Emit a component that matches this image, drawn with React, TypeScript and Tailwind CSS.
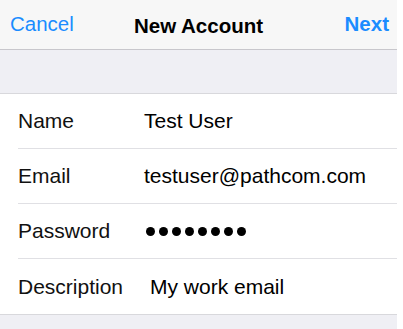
import React from 'react';

const rows = [
  { label: 'Name', value: 'Test User' },
  { label: 'Email', value: 'testuser@pathcom.com' },
  { label: 'Password', value: null },
  { label: 'Description', value: 'My work email', shift: true },
];

export default function App() {
  return (
    <div className="min-h-[329px] w-[403px] bg-white font-['Liberation_Sans',Arial,sans-serif]">
      <div className="w-[397px] min-h-[329px] bg-[#efeff4]">
        {/* nav bar */}
        <div className="relative flex h-[50px] items-center justify-between border-b border-[#c8c7cc] bg-[#f7f7f7] px-[10px]">
          <button className="text-[20.5px] text-[#1a8cff]">Cancel</button>
          <div className="absolute left-0 right-0 top-[11px] text-center text-[20.5px] font-bold text-black pointer-events-none">
            New Account
          </div>
          <button className="mr-[-2px] text-[20.5px] font-bold text-[#1a8cff]">Next</button>
        </div>

        <div className="h-[43px]" />

        <div className="border-y border-[#d8d8dc] bg-white">
          {rows.map((r, i) => (
            <div key={r.label} className="pl-[18px]">
              <div
                className={
                  'flex h-[55px] items-center ' +
                  (i < rows.length - 1 ? 'border-b border-[#e0e0e4]' : '')
                }
              >
                <div className="w-[126px] text-[21px] text-[#111]">{r.label}</div>
                {r.value === null ? (
                  <div className="ml-[2px] flex gap-[4px] pt-[1px]">
                    {Array.from({ length: 8 }).map((_, k) => (
                      <span key={k} className="block h-[9px] w-[9px] rounded-full bg-black" />
                    ))}
                  </div>
                ) : (
                  <div className={'text-[21px] text-black ' + (r.shift ? 'ml-[6px]' : '')}>{r.value}</div>
                )}
              </div>
            </div>
          ))}
        </div>
      </div>
    </div>
  );
}
